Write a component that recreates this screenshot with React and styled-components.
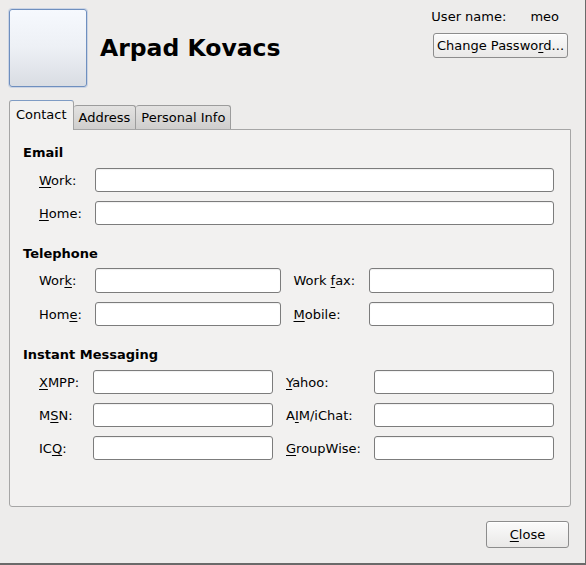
import React from "react";
import styled, { createGlobalStyle } from "styled-components";

const Global = createGlobalStyle`
  html, body { margin: 0; padding: 0; background: #edeceb; }
  body { font-family: "DejaVu Sans", "Liberation Sans", sans-serif; font-size: 13px; color: #000; }
  * { box-sizing: border-box; }
`;

const Window = styled.div`
  width: 586px;
  height: 565px;
  background: #edeceb;
  border-right: 1px solid #6a6a6a;
  border-bottom: 2px solid #6a6a6a;
  padding: 9px 15px 0 9px;
  display: flex;
  flex-direction: column;
`;

const Header = styled.div`
  display: flex;
  align-items: flex-start;
  height: 78px;
`;

const Avatar = styled.div`
  width: 78px;
  height: 78px;
  border: 1px solid #6e8fbf;
  border-radius: 3px;
  background: linear-gradient(#f6f9fe 0%, #edf0f5 50%, #d9dde3 100%);
  box-shadow: 0 0 0 1px rgba(140, 170, 215, 0.35);
  flex: none;
`;

const Name = styled.h1`
  margin: 0 0 0 13px;
  align-self: center;
  font-size: 23.5px;
  font-weight: bold;
  line-height: 28px;
  flex: 1;
`;

const Side = styled.div`
  display: flex;
  flex-direction: column;
  align-items: flex-end;
  margin-top: -1px;
  margin-right: 2px;
`;

const UserRow = styled.div`
  display: flex;
  line-height: 17px;
  gap: 24px;
  padding-right: 9px;
`;

const Button = styled.button`
  font: inherit;
  font-size: 13px;
  color: #000;
  height: ${(p) => p.$h || 25}px;
  width: ${(p) => p.$w}px;
  margin-top: ${(p) => p.$mt || 0}px;
  padding: 0;
  border: 1px solid #8c8c8c;
  border-radius: 3px;
  background: linear-gradient(#fbfbfb, #e9e8e7);
  box-shadow: inset 0 1px 0 #fff;
  line-height: 1;
  white-space: nowrap;
`;

const U = styled.span`
  text-decoration: underline;
  text-underline-offset: 2px;
`;

const Tabs = styled.div`
  display: flex;
  align-items: flex-end;
  margin-top: 13px;
  height: 29px;
  position: relative;
  z-index: 1;
`;

const Tab = styled.div`
  padding: ${(p) => (p.$active ? "0 6px 3px 6px" : "0 5px")};
  display: flex;
  align-items: center;
  line-height: 17px;
  border: 1px solid ${(p) => (p.$active ? "#a3a3a3" : "#9c9c9c")};
  border-top-color: ${(p) => (p.$active ? "#7f9cc4" : "#9c9c9c")};
  border-bottom: none;
  border-left-width: ${(p) => (p.$first ? 1 : 0)}px;
  border-radius: 3px 3px 0 0;
  background: ${(p) =>
    p.$active ? "#f2f1f0" : "linear-gradient(#e3e2e1, #cfcecd)"};
  margin-bottom: ${(p) => (p.$active ? -1 : 0)}px;
  height: ${(p) => (p.$active ? 30 : 24)}px;
`;

const Panel = styled.div`
  width: 562px;
  height: 378px;
  border: 1px solid #a6a6a6;
  border-radius: 0 0 3px 3px;
  background: #f2f1f0;
  padding: 14px 16px 0 13px;
  display: flex;
  flex-direction: column;
  gap: 20px;
`;

const Section = styled.section`
  display: flex;
  flex-direction: column;
  gap: ${(p) => p.$gap ?? 7}px;
`;

const Heading = styled.h2`
  margin: 0;
  font-size: 13px;
  font-weight: bold;
  line-height: 17px;
`;

const Grid = styled.div`
  display: grid;
  grid-template-columns: ${(p) => p.$cols};
  row-gap: ${(p) => p.$gap || 9}px;
  padding-left: 16px;
  align-items: center;
`;

const Label = styled.label`
  line-height: 17px;
  padding-left: ${(p) => (p.$second ? 13 : 0)}px;
`;

const Input = styled.input`
  height: ${(p) => p.$h || 24}px;
  width: 100%;
  border: 1px solid #7c7c7c;
  border-radius: 3px;
  background: #fff;
  box-shadow: inset 0 1px 1px rgba(0, 0, 0, 0.06);
  font: inherit;
  padding: 0 4px;
  outline: none;
`;

const Footer = styled.div`
  display: flex;
  justify-content: flex-end;
  padding-top: 14px;
  padding-right: 1px;
`;

const L = ({ pre = "", u = "", post = "", second }) => (
  <Label $second={second}>
    {pre}
    {u && <U>{u}</U>}
    {post}
  </Label>
);

export default function App() {
  return (
    <>
      <Global />
      <Window>
        <Header>
          <Avatar />
          <Name>Arpad Kovacs</Name>
          <Side>
            <UserRow>
              <span>User name:</span>
              <span>meo</span>
            </UserRow>
            <Button $mt={8} $w={135}>
              Change Passwo<U>r</U>d...
            </Button>
          </Side>
        </Header>
        <Tabs>
          <Tab $active $first>Contact</Tab>
          <Tab>Address</Tab>
          <Tab>Personal Info</Tab>
        </Tabs>
        <Panel>
          <Section>
            <Heading>Email</Heading>
            <Grid $cols="56px 1fr">
              <L u="W" post="ork:" />
              <Input />
              <L u="H" post="ome:" />
              <Input />
            </Grid>
          </Section>
          <Section $gap={6}>
            <Heading>Telephone</Heading>
            <Grid $cols="56px 1fr 88px 1fr" $gap={9}>
              <L pre="Wor" u="k" post=":" />
              <Input $h={25} />
              <L second pre="Work " u="f" post="ax:" />
              <Input $h={25} />
              <L pre="Hom" u="e" post=":" />
              <Input />
              <L second u="M" post="obile:" />
              <Input />
            </Grid>
          </Section>
          <Section>
            <Heading>Instant Messaging</Heading>
            <Grid $cols="54px 1fr 101px 1fr">
              <L u="X" post="MPP:" />
              <Input />
              <L second u="Y" post="ahoo:" />
              <Input />
              <L pre="M" u="S" post="N:" />
              <Input />
              <L second pre="A" u="I" post="M/iChat:" />
              <Input />
              <L pre="IC" u="Q" post=":" />
              <Input />
              <L second u="G" post="roupWise:" />
              <Input />
            </Grid>
          </Section>
        </Panel>
        <Footer>
          <Button $h={27} $w={83}>
            <U>C</U>lose
          </Button>
        </Footer>
      </Window>
    </>
  );
}
